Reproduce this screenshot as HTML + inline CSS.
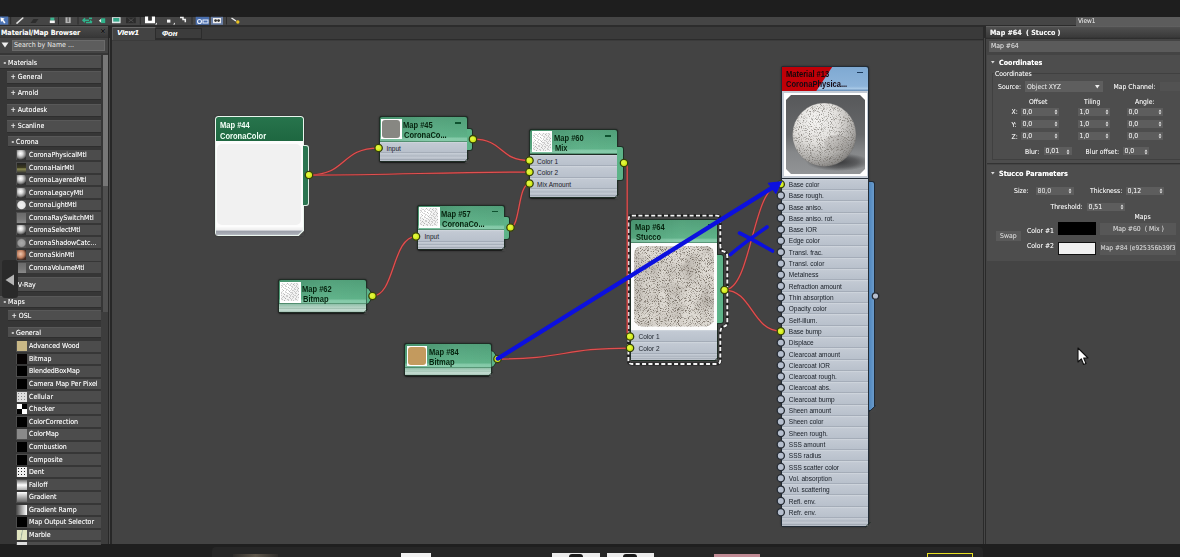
<!DOCTYPE html><html><head><meta charset="utf-8"><title>Slate Material Editor</title><style>
html,body{margin:0;padding:0}
body{width:1180px;height:557px;position:relative;overflow:hidden;background:#444;font-family:"Liberation Sans",sans-serif;color:#fafafa}
.a{position:absolute;box-sizing:border-box}
.ui{font-family:"DejaVu Sans Condensed","Liberation Sans",sans-serif;font-size:7px;white-space:nowrap;line-height:1;text-shadow:0 0 .6px rgba(255,255,255,.55)}
.r{font-size:6.8px}
.row{background:#4e4e4e;border-top:1px solid #585858;border-bottom:1px solid #2e2e2e}
.it{background:#4c4c4c}
.t{position:absolute;white-space:nowrap;line-height:1}
</style></head><body><div id="app" style="position:absolute;left:0;top:0;width:1180px;height:557px;overflow:hidden;filter:blur(0.35px)">
<div class="a " style="left:0px;top:0px;width:1180px;height:17px;background:#1e1e1e"></div>
<div class="a " style="left:0px;top:17px;width:1180px;height:9px;background:#454545;border-bottom:1px solid #2c2c2c"></div>
<div class="a " style="left:0px;top:544px;width:1180px;height:13px;background:#1f1f1f"></div>
<svg class="a" style="left:0;top:16px" width="246" height="10" viewBox="0 16 246 10">
<rect x="0" y="16.5" width="8.3" height="8.2" fill="#4d74b4"/><path d="M0.5 17.5L4.5 18.5L3.3 19.8L5.5 22.5L4.2 23.4L2.2 20.8L1 22Z" fill="#fff"/>
<path d="M10.7 17V24.5M58.5 17V24.5M78 17V24.5M140.3 17V24.5M192 17V24.5M226.5 17V24.5" stroke="#2a2a2a" stroke-width="1"/>
<path d="M17 23.2L22.8 18" stroke="#e0e0e0" stroke-width="1.6" stroke-linecap="round"/>
<path d="M30.5 23L33.5 19H38.5L35.5 23Z" fill="#2d2d2d"/>
<rect x="50.3" y="17.6" width="4" height="3" fill="#3db590"/><rect x="49.8" y="20.5" width="5" height="2.6" fill="#f4f4f4"/>
<rect x="65.5" y="17.3" width="5.2" height="5.8" fill="#b4b4b4"/><rect x="67.6" y="17.3" width="1" height="4.6" fill="#444"/>
<path d="M83 20.2H89M85 18.2L83 20.2L85 22.2M86 22.4H92M90 20.6L92 22.4" stroke="#2fb48c" stroke-width="1.5" fill="none"/><rect x="89" y="17.6" width="3" height="1.6" fill="#2fb48c"/>
<path d="M98.8 20.8L101.5 18.5V23Z" fill="#e8f8f0"/><rect x="101.2" y="18.3" width="4" height="4.8" fill="#2fb48c"/>
<rect x="112" y="17.2" width="8.6" height="6" fill="#dfe8e8"/><rect x="113.2" y="18" width="6.2" height="3.6" fill="#36a88a"/>
<rect x="126" y="17.4" width="9.8" height="5.8" fill="#2b2b2b"/><path d="M128.5 18.5L133.5 22M133.5 18.5L128.5 22" stroke="#555" stroke-width=".8"/>
<path d="M145 16.5H155V23.2H145ZM148.3 16.5V20.6H151.7V16.5" fill="#fff" fill-rule="evenodd"/><rect x="148.3" y="16.5" width="3.4" height="4" fill="#333"/><path d="M157 22.5V24.5H155Z" fill="#eee"/>
<rect x="167" y="19.6" width="3.4" height="3" fill="#f4f4f4"/><path d="M175 22.5V24.5H173Z" fill="#eee"/>
<path d="M180 17.5H183V19.5H185.3V22.3" stroke="#f0f0f0" stroke-width="1.5" fill="none"/>
<rect x="195.7" y="16.8" width="13.4" height="8" fill="#4a6fae"/><circle cx="199.5" cy="21.5" r="2" fill="none" stroke="#e8eefa" stroke-width="1.1"/><rect x="203" y="20" width="5" height="3" fill="none" stroke="#e8eefa" stroke-width="1"/>
<rect x="211" y="16.8" width="12" height="8" fill="#6a7fa5"/><rect x="213" y="18" width="8" height="5.2" fill="#f0f0f0"/><circle cx="215.6" cy="20.6" r="1.4" fill="#333"/><circle cx="218.6" cy="20.6" r="1.4" fill="#333"/>
<path d="M231.5 18L236 21" stroke="#f0f0f0" stroke-width="1.3"/><circle cx="237.8" cy="22" r="1.7" fill="#e8c020"/>
</svg>
<div class="a " style="left:0px;top:26px;width:112px;height:518px;background:#363636"></div>
<div class="a " style="left:107.5px;top:26px;width:4.2px;height:518px;background:#272727"></div>
<div class="a " style="left:108.6px;top:38px;width:1.5px;height:506px;background:#4a4a4a"></div>
<div class="a " style="left:0px;top:26px;width:107.5px;height:12.5px;background:linear-gradient(#5c5c5c 0,#484848 12%,#383838 85%,#2c2c2c 100%)"></div>
<div class="t ui" style="left:1px;top:28.5px;font-weight:bold;font-size:7.1px;color:#f4f4f4">Material/Map Browser</div>
<div class="t ui" style="left:99.5px;top:27.2px;font-weight:bold;font-size:9px;color:#0a0a0a">×</div>
<div class="a " style="left:0px;top:38px;width:108px;height:15px;background:#444"></div>
<svg class="a" style="left:1px;top:42px" width="8" height="6"><path d="M0.5 0.5H7.5L4 5.5Z" fill="#eee"/></svg>
<div class="a " style="left:12px;top:39.5px;width:93px;height:11px;background:#5d5d5d;border:1px solid #6a6a6a"></div>
<div class="t ui" style="left:14px;top:42px;color:#cfcfcf">Search by Name ...</div>
<div class="a " style="left:102.5px;top:55px;width:5px;height:131px;background:#777"></div>
<div class="a " style="left:102.5px;top:186px;width:5px;height:126px;background:#505050"></div>
<div class="a " style="left:101px;top:312px;width:6.5px;height:232px;background:#3d3d3d"></div>
<div class="a row" style="left:0px;top:55.3px;width:100.5px;height:14.2px;"></div>
<div class="t ui" style="left:3.5px;top:59.5px;"><b>-</b> Materials</div>
<div class="a row" style="left:7px;top:70.6px;width:93.5px;height:13px;"></div>
<div class="t ui" style="left:10.5px;top:74.19999999999999px;">+ General</div>
<div class="a row" style="left:7px;top:86.6px;width:93.5px;height:13px;"></div>
<div class="t ui" style="left:10.5px;top:90.19999999999999px;">+ Arnold</div>
<div class="a row" style="left:7px;top:103.5px;width:93.5px;height:13px;"></div>
<div class="t ui" style="left:10.5px;top:107.1px;">+ Autodesk</div>
<div class="a row" style="left:7px;top:119.5px;width:93.5px;height:13px;"></div>
<div class="t ui" style="left:10.5px;top:123.1px;">+ Scanline</div>
<div class="a row" style="left:8px;top:136px;width:92.5px;height:10.8px;"></div>
<div class="t ui" style="left:11.5px;top:138.5px;"><b>-</b> Corona</div>
<div class="a it" style="left:16px;top:149.7px;width:84.5px;height:10.6px;"></div>
<div class="a " style="left:16.5px;top:150.0px;width:9.5px;height:10px;background:radial-gradient(circle at 40% 35%,#fff 0,#ddd 25%,#888 55%,#333 75%)"></div>
<div class="t ui" style="left:29px;top:152.0px;">CoronaPhysicalMtl</div>
<div class="a it" style="left:16px;top:162.23px;width:84.5px;height:10.6px;"></div>
<div class="a " style="left:16.5px;top:162.53px;width:9.5px;height:10px;background:linear-gradient(#222 0,#3c3a20 45%,#8a8a50 60%,#333 100%)"></div>
<div class="t ui" style="left:29px;top:164.53px;">CoronaHairMtl</div>
<div class="a it" style="left:16px;top:174.76px;width:84.5px;height:10.6px;"></div>
<div class="a " style="left:16.5px;top:175.06px;width:9.5px;height:10px;background:radial-gradient(circle at 40% 35%,#fff 0,#ddd 25%,#888 55%,#333 75%)"></div>
<div class="t ui" style="left:29px;top:177.06px;">CoronaLayeredMtl</div>
<div class="a it" style="left:16px;top:187.29px;width:84.5px;height:10.6px;"></div>
<div class="a " style="left:16.5px;top:187.59px;width:9.5px;height:10px;background:radial-gradient(circle at 40% 35%,#fff 0,#ddd 25%,#888 55%,#333 75%)"></div>
<div class="t ui" style="left:29px;top:189.59px;">CoronaLegacyMtl</div>
<div class="a it" style="left:16px;top:199.82px;width:84.5px;height:10.6px;"></div>
<div class="a " style="left:16.5px;top:200.12px;width:9.5px;height:10px;background:radial-gradient(circle at 50% 50%,#f4f4f4 0,#e6e6e6 55%,#555 70%)"></div>
<div class="t ui" style="left:29px;top:202.12px;">CoronaLightMtl</div>
<div class="a it" style="left:16px;top:212.35px;width:84.5px;height:10.6px;"></div>
<div class="a " style="left:16.5px;top:212.65px;width:9.5px;height:10px;background:linear-gradient(#6a6a6a,#777 60%,#8a8a8a 100%)"></div>
<div class="t ui" style="left:29px;top:214.65px;">CoronaRaySwitchMtl</div>
<div class="a it" style="left:16px;top:224.88px;width:84.5px;height:10.6px;"></div>
<div class="a " style="left:16.5px;top:225.18px;width:9.5px;height:10px;background:radial-gradient(circle at 40% 35%,#fff 0,#ddd 25%,#888 55%,#333 75%)"></div>
<div class="t ui" style="left:29px;top:227.18px;">CoronaSelectMtl</div>
<div class="a it" style="left:16px;top:237.40999999999997px;width:84.5px;height:10.6px;"></div>
<div class="a " style="left:16.5px;top:237.70999999999998px;width:9.5px;height:10px;background:radial-gradient(circle at 50% 50%,#aaa 0,#999 50%,#555 70%)"></div>
<div class="t ui" style="left:29px;top:239.70999999999998px;">CoronaShadowCatc...</div>
<div class="a it" style="left:16px;top:249.94px;width:84.5px;height:10.6px;"></div>
<div class="a " style="left:16.5px;top:250.24px;width:9.5px;height:10px;background:radial-gradient(circle at 40% 40%,#f0c8b0 0,#c08060 45%,#402820 75%)"></div>
<div class="t ui" style="left:29px;top:252.24px;">CoronaSkinMtl</div>
<div class="a it" style="left:16px;top:262.46999999999997px;width:84.5px;height:10.6px;"></div>
<div class="a " style="left:16.5px;top:262.77px;width:9.5px;height:10px;background:linear-gradient(#6a6a6a,#777 60%,#8a8a8a 100%)"></div>
<div class="t ui" style="left:29px;top:264.77px;">CoronaVolumeMtl</div>
<div class="a row" style="left:7px;top:277px;width:93.5px;height:15px;"></div>
<div class="t ui" style="left:10.5px;top:281.6px;">+ V-Ray</div>
<div class="a row" style="left:0px;top:296px;width:100.5px;height:12px;"></div>
<div class="t ui" style="left:3.5px;top:299.1px;"><b>-</b> Maps</div>
<div class="a row" style="left:8px;top:310px;width:92.5px;height:11px;"></div>
<div class="t ui" style="left:11.5px;top:312.6px;">+ OSL</div>
<div class="a row" style="left:8px;top:327px;width:92.5px;height:10.8px;"></div>
<div class="t ui" style="left:11.5px;top:329.5px;"><b>-</b> General</div>
<div class="a it" style="left:16px;top:341.0px;width:84.5px;height:10.6px;"></div>
<div class="a " style="left:16.5px;top:341.3px;width:10px;height:10px;background:#c9b886"></div>
<div class="t ui" style="left:29px;top:343.3px;">Advanced Wood</div>
<div class="a it" style="left:16px;top:353.58px;width:84.5px;height:10.6px;"></div>
<div class="a " style="left:16.5px;top:353.88px;width:10px;height:10px;background:#060303"></div>
<div class="t ui" style="left:29px;top:355.88px;">Bitmap</div>
<div class="a it" style="left:16px;top:366.16px;width:84.5px;height:10.6px;"></div>
<div class="a " style="left:16.5px;top:366.46000000000004px;width:10px;height:10px;background:#000"></div>
<div class="t ui" style="left:29px;top:368.46000000000004px;">BlendedBoxMap</div>
<div class="a it" style="left:16px;top:378.74px;width:84.5px;height:10.6px;"></div>
<div class="a " style="left:16.5px;top:379.04px;width:10px;height:10px;background:#000"></div>
<div class="t ui" style="left:29px;top:381.04px;">Camera Map Per Pixel</div>
<div class="a it" style="left:16px;top:391.32px;width:84.5px;height:10.6px;"></div>
<div class="a " style="left:16.5px;top:391.62px;width:10px;height:10px;background:#ddd;background-image:radial-gradient(#888 30%,transparent 32%);background-size:3px 3px"></div>
<div class="t ui" style="left:29px;top:393.62px;">Cellular</div>
<div class="a it" style="left:16px;top:403.9px;width:84.5px;height:10.6px;"></div>
<div class="a " style="left:16.5px;top:404.2px;width:10px;height:10px;background:conic-gradient(#000 25%,#fff 0 50%,#000 0 75%,#fff 0)"></div>
<div class="t ui" style="left:29px;top:406.2px;">Checker</div>
<div class="a it" style="left:16px;top:416.48px;width:84.5px;height:10.6px;"></div>
<div class="a " style="left:16.5px;top:416.78000000000003px;width:10px;height:10px;background:#000"></div>
<div class="t ui" style="left:29px;top:418.78000000000003px;">ColorCorrection</div>
<div class="a it" style="left:16px;top:429.06px;width:84.5px;height:10.6px;"></div>
<div class="a " style="left:16.5px;top:429.36px;width:10px;height:10px;background:#8a8a8a"></div>
<div class="t ui" style="left:29px;top:431.36px;">ColorMap</div>
<div class="a it" style="left:16px;top:441.64px;width:84.5px;height:10.6px;"></div>
<div class="a " style="left:16.5px;top:441.94px;width:10px;height:10px;background:#000"></div>
<div class="t ui" style="left:29px;top:443.94px;">Combustion</div>
<div class="a it" style="left:16px;top:454.22px;width:84.5px;height:10.6px;"></div>
<div class="a " style="left:16.5px;top:454.52000000000004px;width:10px;height:10px;background:#000"></div>
<div class="t ui" style="left:29px;top:456.52000000000004px;">Composite</div>
<div class="a it" style="left:16px;top:466.8px;width:84.5px;height:10.6px;"></div>
<div class="a " style="left:16.5px;top:467.1px;width:10px;height:10px;background:#eee;background-image:radial-gradient(#222 35%,transparent 37%);background-size:3px 3px"></div>
<div class="t ui" style="left:29px;top:469.1px;">Dent</div>
<div class="a it" style="left:16px;top:479.38px;width:84.5px;height:10.6px;"></div>
<div class="a " style="left:16.5px;top:479.68px;width:10px;height:10px;background:linear-gradient(#777,#fff 50%,#aaa)"></div>
<div class="t ui" style="left:29px;top:481.68px;">Falloff</div>
<div class="a it" style="left:16px;top:491.96000000000004px;width:84.5px;height:10.6px;"></div>
<div class="a " style="left:16.5px;top:492.26000000000005px;width:10px;height:10px;background:linear-gradient(#fff,#666)"></div>
<div class="t ui" style="left:29px;top:494.26000000000005px;">Gradient</div>
<div class="a it" style="left:16px;top:504.53999999999996px;width:84.5px;height:10.6px;"></div>
<div class="a " style="left:16.5px;top:504.84px;width:10px;height:10px;background:linear-gradient(90deg,#555,#fff)"></div>
<div class="t ui" style="left:29px;top:506.84px;">Gradient Ramp</div>
<div class="a it" style="left:16px;top:517.12px;width:84.5px;height:10.6px;"></div>
<div class="a " style="left:16.5px;top:517.42px;width:10px;height:10px;background:#000"></div>
<div class="t ui" style="left:29px;top:519.42px;">Map Output Selector</div>
<div class="a it" style="left:16px;top:529.7px;width:84.5px;height:10.6px;"></div>
<div class="a " style="left:16.5px;top:530.0px;width:10px;height:10px;background:#e0e4c0;background-image:linear-gradient(100deg,transparent 40%,#9a9 45%,transparent 55%)"></div>
<div class="t ui" style="left:29px;top:532.0px;">Marble</div>
<div class="a it" style="left:16px;top:541.98px;width:84.5px;height:3px;"></div>
<div class="a " style="left:16.5px;top:542.28px;width:10px;height:2.5px;background:#ddd"></div>
<div class="a " style="left:2px;top:260px;width:16px;height:38px;background:#2a2a2a;border-radius:3px"></div>
<svg class="a" style="left:5px;top:274px" width="10" height="12"><path d="M9 0.5V11.5L0.5 6Z" fill="#b5b5b5"/></svg>
<div class="a " style="left:112px;top:38px;width:871px;height:506px;background:#434343"></div>
<div class="a " style="left:112px;top:26px;width:871px;height:13.5px;background:#3a3a3a;border-bottom:1px solid #2c2c2c;border-top:1px solid #2c2c2c"></div>
<div class="a " style="left:112px;top:27px;width:44px;height:13.5px;background:#434343;border-top:1px solid #6a6a6a;border-left:1px solid #5a5a5a;border-right:1px solid #2c2c2c"></div>
<div class="a " style="left:112px;top:40.3px;width:871px;height:0.8px;background:#3b3b3b"></div>
<div class="t ui" style="left:117px;top:28.7px;font-family:&quot;Liberation Sans&quot;,sans-serif;font-weight:bold;font-style:italic;font-size:7.8px;color:#fff">View1</div>
<div class="a " style="left:156px;top:28px;width:46px;height:10.8px;background:#3c3c3c;border:1px solid #2c2c2c;border-left:none"></div>
<div class="t ui" style="left:162px;top:29.8px;font-family:&quot;Liberation Sans&quot;,sans-serif;font-weight:bold;font-style:italic;font-size:7.8px;color:#f0f0f0">Фон</div>
<div class="a " style="left:982.6px;top:26px;width:3.6px;height:518px;background:#2a2a2a"></div>
<div class="a " style="left:983.9px;top:38px;width:1.2px;height:506px;background:#474747"></div>
<svg width="0" height="0" style="position:absolute"><defs>
<filter id="stc" x="0" y="0" width="100%" height="100%"><feTurbulence type="fractalNoise" baseFrequency="1.1" numOctaves="1" seed="7" result="n"/><feColorMatrix in="n" type="matrix" values="0 0 0 0 0  0 0 0 0 0  0 0 0 0 0  5 0 0 0 -2.55"/><feGaussianBlur stdDeviation="0.4" result="b"/><feComposite in="SourceGraphic" in2="b" operator="in"/></filter>
<filter id="cl" x="0" y="0" width="100%" height="100%"><feTurbulence type="fractalNoise" baseFrequency="0.06" numOctaves="2" seed="3"/><feColorMatrix type="matrix" values="0 0 0 0 0  0 0 0 0 0  0 0 0 0 0  1.6 1.6 0 0 -1.35" result="b"/><feComposite in="SourceGraphic" in2="b" operator="in"/></filter>
</defs></svg>
<div class="a " style="left:214.5px;top:115.5px;width:89.5px;height:120.7px;background:#eaf5ee;border-radius:3.5px;box-shadow:0 0 1.5px rgba(0,0,0,.5)"></div>
<div class="a " style="left:303px;top:145px;width:6.3px;height:61px;background:#2b7551;border:1px solid #dfeee6;border-left:none;border-radius:0 3px 3px 0"></div>
<div class="a " style="left:215.8px;top:116.8px;width:86.9px;height:24.2px;background:linear-gradient(180deg,#27744c,#1e6740);border-radius:2.5px 2.5px 0 0"></div>
<div class="t " style="left:219.5px;top:121.1px;font-family:&quot;Liberation Sans&quot;,sans-serif;font-size:8.4px;color:#f4fff8;font-weight:bold;transform:scaleX(.9);transform-origin:0 0">Map #44</div>
<div class="t " style="left:219.7px;top:131.79999999999998px;font-family:&quot;Liberation Sans&quot;,sans-serif;font-size:8.4px;color:#f0fff6;font-weight:bold;transform:scaleX(.9);transform-origin:0 0">CoronaColor</div>
<div class="a " style="left:215.8px;top:141px;width:86.9px;height:85.5px;background:#fdfdfd"></div>
<div class="a " style="left:217.3px;top:143.5px;width:83.6px;height:81.5px;background:#f1f1f1;border-radius:5px"></div>
<div class="a " style="left:215.8px;top:226.5px;width:86.9px;height:8.5px;background:linear-gradient(180deg,#fafafa 0,#eeeeee 38%,#d8dade 42%,#9a9ea8 50%,#a6aab3 80%,#b8bcc4 100%)"></div>
<svg class="a" style="left:298.2px;top:230.4px" width="6" height="6"><path d="M6 0.3V6H0.3Z" fill="#444"/><path d="M5.8 0L0 5.8" stroke="#eaf5ee" stroke-width="1.2" fill="none"/></svg>
<div class="a " style="left:378.6px;top:116px;width:89px;height:45.8px;background:#1f2d25;border-radius:3px;box-shadow:0 .5px 1.5px rgba(0,0,0,.7)"></div>
<div class="a " style="left:466.6px;top:128px;width:6.5px;height:22.5px;background:#5db388;border:1px solid #1f2d25;border-left:none;border-radius:0 3px 3px 0"></div>
<div class="a " style="left:379.6px;top:117px;width:87px;height:24.5px;background:linear-gradient(90deg,rgba(0,0,0,.07),rgba(255,255,255,.04) 60%,rgba(255,255,255,.02)),linear-gradient(180deg,#4d9d76 0,#5bb086 78%,#82c9a7 86%,#82c9a7 94%,#3b7757 100%);border-radius:2px 2px 0 0"></div>
<div class="a " style="left:381.1px;top:118.7px;width:20.5px;height:20.5px;background:#fff"></div>
<div class="a " style="left:382.3px;top:119.9px;width:18px;height:18px;background:#878782;border-radius:3px"></div>
<div class="t " style="left:403.20000000000005px;top:121.19999999999999px;font-family:&quot;Liberation Sans&quot;,sans-serif;font-size:8.4px;color:#07240f;font-weight:bold;transform:scaleX(.9);transform-origin:0 0">Map #45</div>
<div class="t " style="left:403.80000000000007px;top:131.2px;font-family:&quot;Liberation Sans&quot;,sans-serif;font-size:8.4px;color:#07240f;font-weight:bold;transform:scaleX(.9);transform-origin:0 0">CoronaCo...</div>
<div class="a " style="left:454.8px;top:122.2px;width:6.2px;height:1.8px;background:#0f5230"></div>
<div class="a " style="left:379.6px;top:141.5px;width:87px;height:11.8px;background:linear-gradient(180deg,#d2d8df 0,#c2c9d3 14%,#b9c1cc 88%,#99a1ad 100%)"></div>
<div class="t " style="left:386.40000000000003px;top:145.6px;font-family:&quot;Liberation Sans&quot;,sans-serif;font-size:6.5px;color:#1a2028;">Input</div>
<div class="a " style="left:379.6px;top:153.3px;width:87px;height:7.5px;background:linear-gradient(180deg,#c9cfd8 0,#b7bfc9 30%,#a4acb7 38%,#c6ccd5 48%,#b9c0ca 70%,#9ea6b1 80%,#c2c8d1 90%,#aab2bd 100%)"></div>
<svg class="a" style="left:463.6px;top:157.8px" width="5" height="5"><path d="M5 0.5V5H0.5Z" fill="#444"/><path d="M4.5 0L0 4.5" stroke="#1f2d25" stroke-width="1" fill="none"/></svg>
<div class="a " style="left:529.3px;top:128.6px;width:88.7px;height:69.19999999999999px;background:#1f2d25;border-radius:3px;box-shadow:0 .5px 1.5px rgba(0,0,0,.7)"></div>
<div class="a " style="left:617.0px;top:146px;width:6.5px;height:34.5px;background:#5db388;border:1px solid #1f2d25;border-left:none;border-radius:0 3px 3px 0"></div>
<div class="a " style="left:530.3px;top:129.6px;width:86.7px;height:24.9px;background:linear-gradient(90deg,rgba(0,0,0,.07),rgba(255,255,255,.04) 60%,rgba(255,255,255,.02)),linear-gradient(180deg,#4d9d76 0,#5bb086 78%,#82c9a7 86%,#82c9a7 94%,#3b7757 100%);border-radius:2px 2px 0 0"></div>
<div class="a " style="left:531.8px;top:131.29999999999998px;width:20.5px;height:20.5px;background:#fff"></div>
<div class="a " style="left:533.0px;top:132.5px;width:18px;height:18px;background:#f2f2f2;background-image:repeating-linear-gradient(35deg,transparent 0 2px,rgba(90,90,90,.28) 2px 2.6px),repeating-linear-gradient(120deg,transparent 0 2.5px,rgba(90,90,90,.22) 2.5px 3px),radial-gradient(circle at 30% 30%,#fff 0 25%,transparent 40%);border-radius:3px"></div>
<div class="t " style="left:553.9px;top:133.79999999999998px;font-family:&quot;Liberation Sans&quot;,sans-serif;font-size:8.4px;color:#07240f;font-weight:bold;transform:scaleX(.9);transform-origin:0 0">Map #60</div>
<div class="t " style="left:554.5px;top:143.79999999999998px;font-family:&quot;Liberation Sans&quot;,sans-serif;font-size:8.4px;color:#07240f;font-weight:bold;transform:scaleX(.9);transform-origin:0 0">Mix</div>
<div class="a " style="left:605.2px;top:134.79999999999998px;width:6.2px;height:1.8px;background:#0f5230"></div>
<div class="a " style="left:530.3px;top:154.5px;width:86.7px;height:11.6px;background:linear-gradient(180deg,#d2d8df 0,#c2c9d3 14%,#b9c1cc 88%,#99a1ad 100%)"></div>
<div class="t " style="left:537.0999999999999px;top:158.6px;font-family:&quot;Liberation Sans&quot;,sans-serif;font-size:6.5px;color:#1a2028;">Color 1</div>
<div class="a " style="left:530.3px;top:166.1px;width:86.7px;height:11.6px;background:linear-gradient(180deg,#d2d8df 0,#c2c9d3 14%,#b9c1cc 88%,#99a1ad 100%)"></div>
<div class="t " style="left:537.0999999999999px;top:170.2px;font-family:&quot;Liberation Sans&quot;,sans-serif;font-size:6.5px;color:#1a2028;">Color 2</div>
<div class="a " style="left:530.3px;top:177.7px;width:86.7px;height:11.6px;background:linear-gradient(180deg,#d2d8df 0,#c2c9d3 14%,#b9c1cc 88%,#99a1ad 100%)"></div>
<div class="t " style="left:537.0999999999999px;top:181.79999999999998px;font-family:&quot;Liberation Sans&quot;,sans-serif;font-size:6.5px;color:#1a2028;">Mix Amount</div>
<div class="a " style="left:530.3px;top:189.29999999999998px;width:86.7px;height:7.5px;background:linear-gradient(180deg,#c9cfd8 0,#b7bfc9 30%,#a4acb7 38%,#c6ccd5 48%,#b9c0ca 70%,#9ea6b1 80%,#c2c8d1 90%,#aab2bd 100%)"></div>
<svg class="a" style="left:614.0px;top:193.79999999999998px" width="5" height="5"><path d="M5 0.5V5H0.5Z" fill="#444"/><path d="M4.5 0L0 4.5" stroke="#1f2d25" stroke-width="1" fill="none"/></svg>
<div class="a " style="left:416.7px;top:204.5px;width:88px;height:45.8px;background:#1f2d25;border-radius:3px;box-shadow:0 .5px 1.5px rgba(0,0,0,.7)"></div>
<div class="a " style="left:503.7px;top:216px;width:6.5px;height:23.5px;background:#5db388;border:1px solid #1f2d25;border-left:none;border-radius:0 3px 3px 0"></div>
<div class="a " style="left:417.7px;top:205.5px;width:86px;height:24.5px;background:linear-gradient(90deg,rgba(0,0,0,.07),rgba(255,255,255,.04) 60%,rgba(255,255,255,.02)),linear-gradient(180deg,#4d9d76 0,#5bb086 78%,#82c9a7 86%,#82c9a7 94%,#3b7757 100%);border-radius:2px 2px 0 0"></div>
<div class="a " style="left:419.2px;top:207.2px;width:20.5px;height:20.5px;background:#fff"></div>
<div class="a " style="left:420.4px;top:208.4px;width:18px;height:18px;background:#f2f2f2;background-image:repeating-linear-gradient(35deg,transparent 0 2px,rgba(90,90,90,.28) 2px 2.6px),repeating-linear-gradient(120deg,transparent 0 2.5px,rgba(90,90,90,.22) 2.5px 3px),radial-gradient(circle at 30% 30%,#fff 0 25%,transparent 40%);border-radius:3px"></div>
<div class="t " style="left:441.3px;top:209.7px;font-family:&quot;Liberation Sans&quot;,sans-serif;font-size:8.4px;color:#07240f;font-weight:bold;transform:scaleX(.9);transform-origin:0 0">Map #57</div>
<div class="t " style="left:441.90000000000003px;top:219.7px;font-family:&quot;Liberation Sans&quot;,sans-serif;font-size:8.4px;color:#07240f;font-weight:bold;transform:scaleX(.9);transform-origin:0 0">CoronaCo...</div>
<div class="a " style="left:491.9px;top:210.7px;width:6.2px;height:1.8px;background:#0f5230"></div>
<div class="a " style="left:417.7px;top:230.0px;width:86px;height:11.8px;background:linear-gradient(180deg,#d2d8df 0,#c2c9d3 14%,#b9c1cc 88%,#99a1ad 100%)"></div>
<div class="t " style="left:424.5px;top:234.1px;font-family:&quot;Liberation Sans&quot;,sans-serif;font-size:6.5px;color:#1a2028;">Input</div>
<div class="a " style="left:417.7px;top:241.8px;width:86px;height:7.5px;background:linear-gradient(180deg,#c9cfd8 0,#b7bfc9 30%,#a4acb7 38%,#c6ccd5 48%,#b9c0ca 70%,#9ea6b1 80%,#c2c8d1 90%,#aab2bd 100%)"></div>
<svg class="a" style="left:500.7px;top:246.3px" width="5" height="5"><path d="M5 0.5V5H0.5Z" fill="#444"/><path d="M4.5 0L0 4.5" stroke="#1f2d25" stroke-width="1" fill="none"/></svg>
<div class="a " style="left:277.6px;top:279.4px;width:89px;height:33.8px;background:#1f2d25;border-radius:3px;box-shadow:0 .5px 1.5px rgba(0,0,0,.7)"></div>
<svg class="a" style="left:366.1px;top:286.0px" width="8" height="20" viewBox="0 0 8 20"><path d="M0 1.5L2.5 2.5L6.3 8V12L2.5 17.5L0 18.5Z" fill="#5db388" stroke="#1f2d25" stroke-width="1" stroke-linejoin="round"/></svg>
<div class="a " style="left:278.6px;top:280.4px;width:87px;height:24px;background:linear-gradient(90deg,rgba(0,0,0,.07),rgba(255,255,255,.04) 60%,rgba(255,255,255,.02)),linear-gradient(180deg,#4d9d76 0,#5bb086 78%,#82c9a7 86%,#82c9a7 94%,#3b7757 100%);border-radius:2px 2px 0 0"></div>
<div class="a " style="left:280.1px;top:282.09999999999997px;width:20.5px;height:20.5px;background:#fff"></div>
<div class="a " style="left:281.3px;top:283.29999999999995px;width:18px;height:18px;background:#f2f2f2;background-image:repeating-linear-gradient(35deg,transparent 0 2px,rgba(90,90,90,.28) 2px 2.6px),repeating-linear-gradient(120deg,transparent 0 2.5px,rgba(90,90,90,.22) 2.5px 3px),radial-gradient(circle at 30% 30%,#fff 0 25%,transparent 40%);border-radius:3px"></div>
<div class="t " style="left:302.20000000000005px;top:284.6px;font-family:&quot;Liberation Sans&quot;,sans-serif;font-size:8.4px;color:#07240f;font-weight:bold;transform:scaleX(.9);transform-origin:0 0">Map #62</div>
<div class="t " style="left:302.80000000000007px;top:294.6px;font-family:&quot;Liberation Sans&quot;,sans-serif;font-size:8.4px;color:#07240f;font-weight:bold;transform:scaleX(.9);transform-origin:0 0">Bitmap</div>
<div class="a " style="left:278.6px;top:304.4px;width:87px;height:7.800000000000001px;background:linear-gradient(180deg,#8fbfa8 0,#a6cbb9 25%,#b4d2c4 45%,#9fc0b0 55%,#c2dbd0 65%,#bcd6ca 85%,#9dbcae 100%)"></div>
<svg class="a" style="left:362.6px;top:309.2px" width="5" height="5"><path d="M5 0.5V5H0.5Z" fill="#444"/><path d="M4.5 0L0 4.5" stroke="#1f2d25" stroke-width="1" fill="none"/></svg>
<div class="a " style="left:404px;top:342.8px;width:87.8px;height:32.9px;background:#1f2d25;border-radius:3px;box-shadow:0 .5px 1.5px rgba(0,0,0,.7)"></div>
<svg class="a" style="left:491.3px;top:348.8px" width="8" height="20" viewBox="0 0 8 20"><path d="M0 1.5L2.5 2.5L6.3 8V12L2.5 17.5L0 18.5Z" fill="#5db388" stroke="#1f2d25" stroke-width="1" stroke-linejoin="round"/></svg>
<div class="a " style="left:405px;top:343.8px;width:85.8px;height:24.3px;background:linear-gradient(90deg,rgba(0,0,0,.07),rgba(255,255,255,.04) 60%,rgba(255,255,255,.02)),linear-gradient(180deg,#4d9d76 0,#5bb086 78%,#82c9a7 86%,#82c9a7 94%,#3b7757 100%);border-radius:2px 2px 0 0"></div>
<div class="a " style="left:406.5px;top:345.5px;width:20.5px;height:20.5px;background:#fff"></div>
<div class="a " style="left:407.7px;top:346.7px;width:18px;height:18px;background:#c39a5e;background-image:radial-gradient(rgba(120,80,30,.5) 30%,transparent 35%);background-size:2px 2px;border-radius:3px"></div>
<div class="t " style="left:428.6px;top:348.00000000000006px;font-family:&quot;Liberation Sans&quot;,sans-serif;font-size:8.4px;color:#07240f;font-weight:bold;transform:scaleX(.9);transform-origin:0 0">Map #84</div>
<div class="t " style="left:429.20000000000005px;top:358.00000000000006px;font-family:&quot;Liberation Sans&quot;,sans-serif;font-size:8.4px;color:#07240f;font-weight:bold;transform:scaleX(.9);transform-origin:0 0">Bitmap</div>
<div class="a " style="left:405px;top:368.1px;width:85.8px;height:6.6px;background:linear-gradient(180deg,#8fbfa8 0,#a6cbb9 25%,#b4d2c4 45%,#9fc0b0 55%,#c2dbd0 65%,#bcd6ca 85%,#9dbcae 100%)"></div>
<svg class="a" style="left:487.8px;top:371.7px" width="5" height="5"><path d="M5 0.5V5H0.5Z" fill="#444"/><path d="M4.5 0L0 4.5" stroke="#1f2d25" stroke-width="1" fill="none"/></svg>
<div class="a " style="left:630px;top:218.5px;width:88.3px;height:142.5px;background:#1f2d25;border-radius:3px"></div>
<div class="a " style="left:717.3px;top:254px;width:7px;height:70px;background:#5db388;border:1px solid #1f2d25;border-left:none;border-radius:0 3px 3px 0"></div>
<div class="a " style="left:631px;top:219.5px;width:86.3px;height:23.5px;background:linear-gradient(90deg,rgba(0,0,0,.07),rgba(255,255,255,.04) 60%,rgba(255,255,255,.02)),linear-gradient(180deg,#4d9d76 0,#5bb086 78%,#82c9a7 86%,#82c9a7 94%,#3b7757 100%);border-radius:2px 2px 0 0"></div>
<div class="t " style="left:635px;top:222.9px;font-family:&quot;Liberation Sans&quot;,sans-serif;font-size:8.4px;color:#07240f;font-weight:bold;transform:scaleX(.9);transform-origin:0 0">Map #64</div>
<div class="t " style="left:636.2px;top:232.9px;font-family:&quot;Liberation Sans&quot;,sans-serif;font-size:8.4px;color:#07240f;font-weight:bold;transform:scaleX(.9);transform-origin:0 0">Stucco</div>
<div class="a " style="left:707.5px;top:223.8px;width:6.2px;height:1.8px;background:#0f5230"></div>
<div class="a " style="left:631px;top:243px;width:86.3px;height:86.5px;background:#fcfcfc"></div>
<svg class="a" style="left:634px;top:246.3px" width="80" height="80.4" viewBox="0 0 80 80.4"><rect width="80" height="80.4" rx="8" fill="#dedad3"/><rect width="80" height="80.4" rx="8" fill="#807870" filter="url(#cl)" opacity=".35"/><rect width="80" height="80.4" rx="8" fill="#6a6258" filter="url(#stc)" opacity=".85"/></svg>
<div class="a " style="left:631px;top:329.5px;width:86.3px;height:12px;background:linear-gradient(180deg,#d2d8df 0,#c2c9d3 14%,#b9c1cc 88%,#99a1ad 100%)"></div>
<div class="t " style="left:638.6px;top:333.8px;font-family:&quot;Liberation Sans&quot;,sans-serif;font-size:6.5px;color:#1a2028;">Color 1</div>
<div class="a " style="left:631px;top:341.5px;width:86.3px;height:12px;background:linear-gradient(180deg,#d2d8df 0,#c2c9d3 14%,#b9c1cc 88%,#99a1ad 100%)"></div>
<div class="t " style="left:638.6px;top:345.8px;font-family:&quot;Liberation Sans&quot;,sans-serif;font-size:6.5px;color:#1a2028;">Color 2</div>
<div class="a " style="left:631px;top:353.5px;width:86.3px;height:6.5px;background:linear-gradient(180deg,#c9cfd8 0,#b7bfc9 30%,#a4acb7 38%,#c6ccd5 48%,#b9c0ca 70%,#9ea6b1 80%,#c2c8d1 90%,#aab2bd 100%)"></div>
<svg class="a" style="left:714.3px;top:357px" width="5" height="5"><path d="M5 0.5V5H0.5Z" fill="#444"/><path d="M4.5 0L0 4.5" stroke="#1f2d25" stroke-width="1" fill="none"/></svg>
<div class="a " style="left:781.3px;top:65.5px;width:88.2px;height:461.5px;background:#222c36;border-radius:3px;box-shadow:0 0 1.5px rgba(0,0,0,.6)"></div>
<div class="a " style="left:869px;top:181px;width:6.3px;height:229.5px;background:linear-gradient(90deg,#4f86bd,#6a9bcc);border:1px solid #1f2a36;border-left:none;border-radius:0 3px 0 0"></div>
<svg class="a" style="left:869px;top:405px" width="7" height="7"><path d="M7 0V7H0Z" fill="#444"/><path d="M6.8 0.5L0 6.8" stroke="#1f2a36" fill="none"/></svg>
<div class="a " style="left:782.3px;top:66.5px;width:86.2px;height:24px;background:linear-gradient(180deg,#7fa9d2 0,#8db4da 80%,#a8c8e6 90%,#5d86b0 100%);border-radius:2px 2px 0 0"></div>
<svg class="a" style="left:782.3px;top:66.5px" width="54" height="24"><path d="M0 0H50.2L34.3 24H0Z" fill="#c00008"/></svg>
<div class="t " style="left:785.5px;top:70.39999999999999px;font-family:&quot;Liberation Sans&quot;,sans-serif;font-size:8.4px;color:#14060a;font-weight:bold;transform:scaleX(.9);transform-origin:0 0">Material #13</div>
<div class="t " style="left:786px;top:80.39999999999999px;font-family:&quot;Liberation Sans&quot;,sans-serif;font-size:8.4px;color:#160a14;font-weight:bold;transform:scaleX(.9);transform-origin:0 0">CoronaPhysica...</div>
<div class="a " style="left:857.2px;top:71.6px;width:6.2px;height:1.8px;background:#1c3a5c"></div>
<div class="a " style="left:782.3px;top:90.5px;width:86.2px;height:87.5px;background:#c3cad4"></div>
<div class="a " style="left:784px;top:92.7px;width:83px;height:83px;background:#fff"></div>
<svg class="a" style="left:786px;top:94.7px" width="79" height="79" viewBox="0 0 79 79"><defs><radialGradient id="sph" cx="36%" cy="28%" r="78%"><stop offset="0" stop-color="#f6f5f3"/><stop offset=".45" stop-color="#e2e0dd"/><stop offset=".75" stop-color="#b4b2af"/><stop offset="1" stop-color="#7f7d7b"/></radialGradient><linearGradient id="bgp" x1="0" y1="0" x2="0" y2="1"><stop offset="0" stop-color="#57585a"/><stop offset=".5" stop-color="#66686a"/><stop offset=".72" stop-color="#858789"/><stop offset="1" stop-color="#929496"/></linearGradient><radialGradient id="shd" cx="50%" cy="50%" r="50%"><stop offset="0" stop-color="#2a2a2c" stop-opacity=".85"/><stop offset=".6" stop-color="#2a2a2c" stop-opacity=".5"/><stop offset="1" stop-color="#2a2a2c" stop-opacity="0"/></radialGradient><clipPath id="sc"><circle cx="38.3" cy="39.7" r="31.8"/></clipPath></defs>
<path d="M5 0H74L79 5V74L74 79H5L0 74V5Z" fill="url(#bgp)"/>
<ellipse cx="52" cy="67" rx="32" ry="9" fill="url(#shd)"/>
<circle cx="38.3" cy="39.7" r="31.8" fill="url(#sph)"/>
<g clip-path="url(#sc)"><rect x="5" y="5" width="70" height="70" fill="#6a6660" filter="url(#stc)" opacity=".65"/><ellipse cx="50" cy="48" rx="12" ry="8" fill="#8a8884" opacity=".25"/></g>
<circle cx="38.3" cy="39.7" r="31.8" fill="none" stroke="#666" stroke-opacity=".3" stroke-width="1"/>
</svg>
<div class="a " style="left:782.3px;top:178.6px;width:86.2px;height:11.31px;background:linear-gradient(180deg,#d2d8df 0,#c2c9d3 14%,#b9c1cc 88%,#99a1ad 100%)"></div>
<div class="t " style="left:788.8px;top:181.9px;font-family:&quot;Liberation Sans&quot;,sans-serif;font-size:6.5px;color:#161c24;">Base color</div>
<div class="a " style="left:782.3px;top:189.91px;width:86.2px;height:11.31px;background:linear-gradient(180deg,#d2d8df 0,#c2c9d3 14%,#b9c1cc 88%,#99a1ad 100%)"></div>
<div class="t " style="left:788.8px;top:193.21px;font-family:&quot;Liberation Sans&quot;,sans-serif;font-size:6.5px;color:#161c24;">Base rough.</div>
<div class="a " style="left:782.3px;top:201.22px;width:86.2px;height:11.31px;background:linear-gradient(180deg,#d2d8df 0,#c2c9d3 14%,#b9c1cc 88%,#99a1ad 100%)"></div>
<div class="t " style="left:788.8px;top:204.52px;font-family:&quot;Liberation Sans&quot;,sans-serif;font-size:6.5px;color:#161c24;">Base aniso.</div>
<div class="a " style="left:782.3px;top:212.53px;width:86.2px;height:11.31px;background:linear-gradient(180deg,#d2d8df 0,#c2c9d3 14%,#b9c1cc 88%,#99a1ad 100%)"></div>
<div class="t " style="left:788.8px;top:215.83px;font-family:&quot;Liberation Sans&quot;,sans-serif;font-size:6.5px;color:#161c24;">Base aniso. rot.</div>
<div class="a " style="left:782.3px;top:223.84px;width:86.2px;height:11.31px;background:linear-gradient(180deg,#d2d8df 0,#c2c9d3 14%,#b9c1cc 88%,#99a1ad 100%)"></div>
<div class="t " style="left:788.8px;top:227.14000000000001px;font-family:&quot;Liberation Sans&quot;,sans-serif;font-size:6.5px;color:#161c24;">Base IOR</div>
<div class="a " style="left:782.3px;top:235.15px;width:86.2px;height:11.31px;background:linear-gradient(180deg,#d2d8df 0,#c2c9d3 14%,#b9c1cc 88%,#99a1ad 100%)"></div>
<div class="t " style="left:788.8px;top:238.45000000000002px;font-family:&quot;Liberation Sans&quot;,sans-serif;font-size:6.5px;color:#161c24;">Edge color</div>
<div class="a " style="left:782.3px;top:246.45999999999998px;width:86.2px;height:11.31px;background:linear-gradient(180deg,#d2d8df 0,#c2c9d3 14%,#b9c1cc 88%,#99a1ad 100%)"></div>
<div class="t " style="left:788.8px;top:249.76px;font-family:&quot;Liberation Sans&quot;,sans-serif;font-size:6.5px;color:#161c24;">Transl. frac.</div>
<div class="a " style="left:782.3px;top:257.77px;width:86.2px;height:11.31px;background:linear-gradient(180deg,#d2d8df 0,#c2c9d3 14%,#b9c1cc 88%,#99a1ad 100%)"></div>
<div class="t " style="left:788.8px;top:261.07px;font-family:&quot;Liberation Sans&quot;,sans-serif;font-size:6.5px;color:#161c24;">Transl. color</div>
<div class="a " style="left:782.3px;top:269.08px;width:86.2px;height:11.31px;background:linear-gradient(180deg,#d2d8df 0,#c2c9d3 14%,#b9c1cc 88%,#99a1ad 100%)"></div>
<div class="t " style="left:788.8px;top:272.38px;font-family:&quot;Liberation Sans&quot;,sans-serif;font-size:6.5px;color:#161c24;">Metalness</div>
<div class="a " style="left:782.3px;top:280.39px;width:86.2px;height:11.31px;background:linear-gradient(180deg,#d2d8df 0,#c2c9d3 14%,#b9c1cc 88%,#99a1ad 100%)"></div>
<div class="t " style="left:788.8px;top:283.69px;font-family:&quot;Liberation Sans&quot;,sans-serif;font-size:6.5px;color:#161c24;">Refraction amount</div>
<div class="a " style="left:782.3px;top:291.7px;width:86.2px;height:11.31px;background:linear-gradient(180deg,#d2d8df 0,#c2c9d3 14%,#b9c1cc 88%,#99a1ad 100%)"></div>
<div class="t " style="left:788.8px;top:295.0px;font-family:&quot;Liberation Sans&quot;,sans-serif;font-size:6.5px;color:#161c24;">Thin absorption</div>
<div class="a " style="left:782.3px;top:303.01px;width:86.2px;height:11.31px;background:linear-gradient(180deg,#d2d8df 0,#c2c9d3 14%,#b9c1cc 88%,#99a1ad 100%)"></div>
<div class="t " style="left:788.8px;top:306.31px;font-family:&quot;Liberation Sans&quot;,sans-serif;font-size:6.5px;color:#161c24;">Opacity color</div>
<div class="a " style="left:782.3px;top:314.32px;width:86.2px;height:11.31px;background:linear-gradient(180deg,#d2d8df 0,#c2c9d3 14%,#b9c1cc 88%,#99a1ad 100%)"></div>
<div class="t " style="left:788.8px;top:317.62px;font-family:&quot;Liberation Sans&quot;,sans-serif;font-size:6.5px;color:#161c24;">Self-illum.</div>
<div class="a " style="left:782.3px;top:325.63px;width:86.2px;height:11.31px;background:linear-gradient(180deg,#d2d8df 0,#c2c9d3 14%,#b9c1cc 88%,#99a1ad 100%)"></div>
<div class="t " style="left:788.8px;top:328.93px;font-family:&quot;Liberation Sans&quot;,sans-serif;font-size:6.5px;color:#161c24;">Base bump</div>
<div class="a " style="left:782.3px;top:336.94px;width:86.2px;height:11.31px;background:linear-gradient(180deg,#d2d8df 0,#c2c9d3 14%,#b9c1cc 88%,#99a1ad 100%)"></div>
<div class="t " style="left:788.8px;top:340.24px;font-family:&quot;Liberation Sans&quot;,sans-serif;font-size:6.5px;color:#161c24;">Displace</div>
<div class="a " style="left:782.3px;top:348.25px;width:86.2px;height:11.31px;background:linear-gradient(180deg,#d2d8df 0,#c2c9d3 14%,#b9c1cc 88%,#99a1ad 100%)"></div>
<div class="t " style="left:788.8px;top:351.55px;font-family:&quot;Liberation Sans&quot;,sans-serif;font-size:6.5px;color:#161c24;">Clearcoat amount</div>
<div class="a " style="left:782.3px;top:359.56px;width:86.2px;height:11.31px;background:linear-gradient(180deg,#d2d8df 0,#c2c9d3 14%,#b9c1cc 88%,#99a1ad 100%)"></div>
<div class="t " style="left:788.8px;top:362.86px;font-family:&quot;Liberation Sans&quot;,sans-serif;font-size:6.5px;color:#161c24;">Clearcoat IOR</div>
<div class="a " style="left:782.3px;top:370.87px;width:86.2px;height:11.31px;background:linear-gradient(180deg,#d2d8df 0,#c2c9d3 14%,#b9c1cc 88%,#99a1ad 100%)"></div>
<div class="t " style="left:788.8px;top:374.17px;font-family:&quot;Liberation Sans&quot;,sans-serif;font-size:6.5px;color:#161c24;">Clearcoat rough.</div>
<div class="a " style="left:782.3px;top:382.18px;width:86.2px;height:11.31px;background:linear-gradient(180deg,#d2d8df 0,#c2c9d3 14%,#b9c1cc 88%,#99a1ad 100%)"></div>
<div class="t " style="left:788.8px;top:385.48px;font-family:&quot;Liberation Sans&quot;,sans-serif;font-size:6.5px;color:#161c24;">Clearcoat abs.</div>
<div class="a " style="left:782.3px;top:393.49px;width:86.2px;height:11.31px;background:linear-gradient(180deg,#d2d8df 0,#c2c9d3 14%,#b9c1cc 88%,#99a1ad 100%)"></div>
<div class="t " style="left:788.8px;top:396.79px;font-family:&quot;Liberation Sans&quot;,sans-serif;font-size:6.5px;color:#161c24;">Clearcoat bump</div>
<div class="a " style="left:782.3px;top:404.8px;width:86.2px;height:11.31px;background:linear-gradient(180deg,#d2d8df 0,#c2c9d3 14%,#b9c1cc 88%,#99a1ad 100%)"></div>
<div class="t " style="left:788.8px;top:408.1px;font-family:&quot;Liberation Sans&quot;,sans-serif;font-size:6.5px;color:#161c24;">Sheen amount</div>
<div class="a " style="left:782.3px;top:416.11px;width:86.2px;height:11.31px;background:linear-gradient(180deg,#d2d8df 0,#c2c9d3 14%,#b9c1cc 88%,#99a1ad 100%)"></div>
<div class="t " style="left:788.8px;top:419.41px;font-family:&quot;Liberation Sans&quot;,sans-serif;font-size:6.5px;color:#161c24;">Sheen color</div>
<div class="a " style="left:782.3px;top:427.42px;width:86.2px;height:11.31px;background:linear-gradient(180deg,#d2d8df 0,#c2c9d3 14%,#b9c1cc 88%,#99a1ad 100%)"></div>
<div class="t " style="left:788.8px;top:430.72px;font-family:&quot;Liberation Sans&quot;,sans-serif;font-size:6.5px;color:#161c24;">Sheen rough.</div>
<div class="a " style="left:782.3px;top:438.73px;width:86.2px;height:11.31px;background:linear-gradient(180deg,#d2d8df 0,#c2c9d3 14%,#b9c1cc 88%,#99a1ad 100%)"></div>
<div class="t " style="left:788.8px;top:442.03000000000003px;font-family:&quot;Liberation Sans&quot;,sans-serif;font-size:6.5px;color:#161c24;">SSS amount</div>
<div class="a " style="left:782.3px;top:450.03999999999996px;width:86.2px;height:11.31px;background:linear-gradient(180deg,#d2d8df 0,#c2c9d3 14%,#b9c1cc 88%,#99a1ad 100%)"></div>
<div class="t " style="left:788.8px;top:453.34px;font-family:&quot;Liberation Sans&quot;,sans-serif;font-size:6.5px;color:#161c24;">SSS radius</div>
<div class="a " style="left:782.3px;top:461.35px;width:86.2px;height:11.31px;background:linear-gradient(180deg,#d2d8df 0,#c2c9d3 14%,#b9c1cc 88%,#99a1ad 100%)"></div>
<div class="t " style="left:788.8px;top:464.65000000000003px;font-family:&quot;Liberation Sans&quot;,sans-serif;font-size:6.5px;color:#161c24;">SSS scatter color</div>
<div class="a " style="left:782.3px;top:472.65999999999997px;width:86.2px;height:11.31px;background:linear-gradient(180deg,#d2d8df 0,#c2c9d3 14%,#b9c1cc 88%,#99a1ad 100%)"></div>
<div class="t " style="left:788.8px;top:475.96px;font-family:&quot;Liberation Sans&quot;,sans-serif;font-size:6.5px;color:#161c24;">Vol. absorption</div>
<div class="a " style="left:782.3px;top:483.97px;width:86.2px;height:11.31px;background:linear-gradient(180deg,#d2d8df 0,#c2c9d3 14%,#b9c1cc 88%,#99a1ad 100%)"></div>
<div class="t " style="left:788.8px;top:487.27000000000004px;font-family:&quot;Liberation Sans&quot;,sans-serif;font-size:6.5px;color:#161c24;">Vol. scattering</div>
<div class="a " style="left:782.3px;top:495.28px;width:86.2px;height:11.31px;background:linear-gradient(180deg,#d2d8df 0,#c2c9d3 14%,#b9c1cc 88%,#99a1ad 100%)"></div>
<div class="t " style="left:788.8px;top:498.58px;font-family:&quot;Liberation Sans&quot;,sans-serif;font-size:6.5px;color:#161c24;">Refl. env.</div>
<div class="a " style="left:782.3px;top:506.59000000000003px;width:86.2px;height:11.31px;background:linear-gradient(180deg,#d2d8df 0,#c2c9d3 14%,#b9c1cc 88%,#99a1ad 100%)"></div>
<div class="t " style="left:788.8px;top:509.89000000000004px;font-family:&quot;Liberation Sans&quot;,sans-serif;font-size:6.5px;color:#161c24;">Refr. env.</div>
<div class="a " style="left:782.3px;top:517.9px;width:86.2px;height:8.100000000000023px;background:linear-gradient(180deg,#c9cfd8 0,#b7bfc9 30%,#a4acb7 38%,#c6ccd5 48%,#b9c0ca 70%,#9ea6b1 80%,#c2c8d1 90%,#aab2bd 100%)"></div>
<svg class="a" style="left:864.5px;top:522.0px" width="6" height="6"><path d="M6 0.5V6H0.5Z" fill="#444"/><path d="M5.5 0L0 5.5" stroke="#1f2d25" stroke-width="1" fill="none"/></svg>
<svg class="a" style="left:0;top:0;overflow:visible" width="1180" height="557" viewBox="0 0 1180 557"><path d="M632 215.6H716.5Q720.3 215.6 720.3 219.5V245Q720.3 251 724 251.5Q727.3 252.5 727.3 257V321Q727.3 326 724 326.5Q720.3 327 720.3 333V360.2Q720.3 364 716.5 364H632Q628.4 364 628.4 360.2V219.5Q628.4 215.6 632 215.6Z" fill="none" stroke="#222" stroke-width="3"/><path d="M632 215.6H716.5Q720.3 215.6 720.3 219.5V245Q720.3 251 724 251.5Q727.3 252.5 727.3 257V321Q727.3 326 724 326.5Q720.3 327 720.3 333V360.2Q720.3 364 716.5 364H632Q628.4 364 628.4 360.2V219.5Q628.4 215.6 632 215.6Z" fill="none" stroke="#f4f4f4" stroke-width="1.9" stroke-dasharray="4 2.4"/><path d="M309 175C347.28000000000003 175 340.32 148 378.6 148" fill="none" stroke="#7a2424" stroke-width="2.2" stroke-opacity=".55"/><path d="M309 175C347.28000000000003 175 340.32 148 378.6 148" fill="none" stroke="#e05050" stroke-width="1.25"/><path d="M309 175C397.2 175 441.3 172 529.5 172" fill="none" stroke="#7a2424" stroke-width="2.2" stroke-opacity=".55"/><path d="M309 175C397.2 175 441.3 172 529.5 172" fill="none" stroke="#e05050" stroke-width="1.25"/><path d="M473 139.2C504.075 139.2 498.425 160.5 529.5 160.5" fill="none" stroke="#7a2424" stroke-width="2.2" stroke-opacity=".55"/><path d="M473 139.2C504.075 139.2 498.425 160.5 529.5 160.5" fill="none" stroke="#e05050" stroke-width="1.25"/><path d="M510.5 227.5C520 227.5 518 183.5 529.5 183.5" fill="none" stroke="#7a2424" stroke-width="2.2" stroke-opacity=".55"/><path d="M510.5 227.5C520 227.5 518 183.5 529.5 183.5" fill="none" stroke="#e05050" stroke-width="1.25"/><path d="M372.5 296C395 296 392 236.5 416 236.5" fill="none" stroke="#7a2424" stroke-width="2.2" stroke-opacity=".55"/><path d="M372.5 296C395 296 392 236.5 416 236.5" fill="none" stroke="#e05050" stroke-width="1.25"/><path d="M497.5 359C563.75 359 563.75 348 630 348" fill="none" stroke="#7a2424" stroke-width="2.2" stroke-opacity=".55"/><path d="M497.5 359C563.75 359 563.75 348 630 348" fill="none" stroke="#e05050" stroke-width="1.25"/><path d="M624 163C628 163 627.2 166 627.2 175V326C627.2 333 626.8 336.5 630 336.5" fill="none" stroke="#7a2424" stroke-width="2.2" stroke-opacity=".55"/><path d="M624 163C628 163 627.2 166 627.2 175V326C627.2 333 626.8 336.5 630 336.5" fill="none" stroke="#e05050" stroke-width="1.25"/><path d="M724.5 290C752 290 752 184.3 780.8 184.3" fill="none" stroke="#7a2424" stroke-width="2.2" stroke-opacity=".55"/><path d="M724.5 290C752 290 752 184.3 780.8 184.3" fill="none" stroke="#e05050" stroke-width="1.25"/><path d="M724.5 290C752 290 752 331 780.8 331" fill="none" stroke="#7a2424" stroke-width="2.2" stroke-opacity=".55"/><path d="M724.5 290C752 290 752 331 780.8 331" fill="none" stroke="#e05050" stroke-width="1.25"/><circle cx="309" cy="175" r="3.7" fill="#d4ec1c" stroke="#34400c" stroke-width="1.3"/><circle cx="308.4" cy="174.4" r="2.1" fill="#e6fa4a" opacity=".7"/><circle cx="378.6" cy="148" r="3.7" fill="#d4ec1c" stroke="#34400c" stroke-width="1.3"/><circle cx="378.0" cy="147.4" r="2.1" fill="#e6fa4a" opacity=".7"/><circle cx="473" cy="139.2" r="3.7" fill="#d4ec1c" stroke="#34400c" stroke-width="1.3"/><circle cx="472.4" cy="138.6" r="2.1" fill="#e6fa4a" opacity=".7"/><circle cx="529.5" cy="160.5" r="3.7" fill="#d4ec1c" stroke="#34400c" stroke-width="1.3"/><circle cx="528.9" cy="159.9" r="2.1" fill="#e6fa4a" opacity=".7"/><circle cx="529.5" cy="172" r="3.7" fill="#d4ec1c" stroke="#34400c" stroke-width="1.3"/><circle cx="528.9" cy="171.4" r="2.1" fill="#e6fa4a" opacity=".7"/><circle cx="529.5" cy="183.5" r="3.7" fill="#d4ec1c" stroke="#34400c" stroke-width="1.3"/><circle cx="528.9" cy="182.9" r="2.1" fill="#e6fa4a" opacity=".7"/><circle cx="624" cy="163" r="3.7" fill="#d4ec1c" stroke="#34400c" stroke-width="1.3"/><circle cx="623.4" cy="162.4" r="2.1" fill="#e6fa4a" opacity=".7"/><circle cx="416" cy="236.5" r="3.7" fill="#d4ec1c" stroke="#34400c" stroke-width="1.3"/><circle cx="415.4" cy="235.9" r="2.1" fill="#e6fa4a" opacity=".7"/><circle cx="510.5" cy="227.5" r="3.7" fill="#d4ec1c" stroke="#34400c" stroke-width="1.3"/><circle cx="509.9" cy="226.9" r="2.1" fill="#e6fa4a" opacity=".7"/><circle cx="372.5" cy="296" r="3.7" fill="#d4ec1c" stroke="#34400c" stroke-width="1.3"/><circle cx="371.9" cy="295.4" r="2.1" fill="#e6fa4a" opacity=".7"/><circle cx="497.5" cy="359" r="3.7" fill="#d4ec1c" stroke="#34400c" stroke-width="1.3"/><circle cx="496.9" cy="358.4" r="2.1" fill="#e6fa4a" opacity=".7"/><circle cx="630" cy="336.5" r="3.7" fill="#d4ec1c" stroke="#34400c" stroke-width="1.3"/><circle cx="629.4" cy="335.9" r="2.1" fill="#e6fa4a" opacity=".7"/><circle cx="630" cy="348" r="3.7" fill="#d4ec1c" stroke="#34400c" stroke-width="1.3"/><circle cx="629.4" cy="347.4" r="2.1" fill="#e6fa4a" opacity=".7"/><circle cx="724.5" cy="290" r="3.7" fill="#d4ec1c" stroke="#34400c" stroke-width="1.3"/><circle cx="723.9" cy="289.4" r="2.1" fill="#e6fa4a" opacity=".7"/><circle cx="780.8" cy="184.255" r="3.6" fill="#d4ec1c" stroke="#34400c" stroke-width="1.3"/><circle cx="780.1999999999999" cy="183.655" r="2.0" fill="#e6fa4a" opacity=".7"/><circle cx="780.8" cy="195.565" r="3.6" fill="#b6bfce" stroke="#262c34" stroke-width="1.3"/><circle cx="780.8" cy="206.875" r="3.6" fill="#b6bfce" stroke="#262c34" stroke-width="1.3"/><circle cx="780.8" cy="218.185" r="3.6" fill="#b6bfce" stroke="#262c34" stroke-width="1.3"/><circle cx="780.8" cy="229.495" r="3.6" fill="#b6bfce" stroke="#262c34" stroke-width="1.3"/><circle cx="780.8" cy="240.805" r="3.6" fill="#b6bfce" stroke="#262c34" stroke-width="1.3"/><circle cx="780.8" cy="252.11499999999998" r="3.6" fill="#b6bfce" stroke="#262c34" stroke-width="1.3"/><circle cx="780.8" cy="263.42499999999995" r="3.6" fill="#b6bfce" stroke="#262c34" stroke-width="1.3"/><circle cx="780.8" cy="274.73499999999996" r="3.6" fill="#b6bfce" stroke="#262c34" stroke-width="1.3"/><circle cx="780.8" cy="286.04499999999996" r="3.6" fill="#b6bfce" stroke="#262c34" stroke-width="1.3"/><circle cx="780.8" cy="297.35499999999996" r="3.6" fill="#b6bfce" stroke="#262c34" stroke-width="1.3"/><circle cx="780.8" cy="308.66499999999996" r="3.6" fill="#b6bfce" stroke="#262c34" stroke-width="1.3"/><circle cx="780.8" cy="319.97499999999997" r="3.6" fill="#b6bfce" stroke="#262c34" stroke-width="1.3"/><circle cx="780.8" cy="331.28499999999997" r="3.6" fill="#d4ec1c" stroke="#34400c" stroke-width="1.3"/><circle cx="780.1999999999999" cy="330.68499999999995" r="2.0" fill="#e6fa4a" opacity=".7"/><circle cx="780.8" cy="342.59499999999997" r="3.6" fill="#b6bfce" stroke="#262c34" stroke-width="1.3"/><circle cx="780.8" cy="353.905" r="3.6" fill="#b6bfce" stroke="#262c34" stroke-width="1.3"/><circle cx="780.8" cy="365.215" r="3.6" fill="#b6bfce" stroke="#262c34" stroke-width="1.3"/><circle cx="780.8" cy="376.525" r="3.6" fill="#b6bfce" stroke="#262c34" stroke-width="1.3"/><circle cx="780.8" cy="387.835" r="3.6" fill="#b6bfce" stroke="#262c34" stroke-width="1.3"/><circle cx="780.8" cy="399.145" r="3.6" fill="#b6bfce" stroke="#262c34" stroke-width="1.3"/><circle cx="780.8" cy="410.455" r="3.6" fill="#b6bfce" stroke="#262c34" stroke-width="1.3"/><circle cx="780.8" cy="421.765" r="3.6" fill="#b6bfce" stroke="#262c34" stroke-width="1.3"/><circle cx="780.8" cy="433.075" r="3.6" fill="#b6bfce" stroke="#262c34" stroke-width="1.3"/><circle cx="780.8" cy="444.385" r="3.6" fill="#b6bfce" stroke="#262c34" stroke-width="1.3"/><circle cx="780.8" cy="455.69499999999994" r="3.6" fill="#b6bfce" stroke="#262c34" stroke-width="1.3"/><circle cx="780.8" cy="467.005" r="3.6" fill="#b6bfce" stroke="#262c34" stroke-width="1.3"/><circle cx="780.8" cy="478.31499999999994" r="3.6" fill="#b6bfce" stroke="#262c34" stroke-width="1.3"/><circle cx="780.8" cy="489.625" r="3.6" fill="#b6bfce" stroke="#262c34" stroke-width="1.3"/><circle cx="780.8" cy="500.93499999999995" r="3.6" fill="#b6bfce" stroke="#262c34" stroke-width="1.3"/><circle cx="780.8" cy="512.245" r="3.6" fill="#b6bfce" stroke="#262c34" stroke-width="1.3"/><circle cx="875.5" cy="296" r="3.2" fill="#b6bfce" stroke="#262c34" stroke-width="1.3"/><path d="M497.8 358.6L772 187.9" stroke="#0c10df" stroke-width="4.3" stroke-linecap="round" fill="none"/><path d="M781.7 181.6L768.2 183.2L775.8 193.6Z" fill="#0c10df" stroke="#0c10df" stroke-width="1" stroke-linejoin="round"/><path d="M730.5 254.5C740 246 754 236 767 227" stroke="#0c10df" stroke-width="3.6" stroke-linecap="round" fill="none"/><path d="M739.5 233C750 238 762 245 772.5 251" stroke="#0c10df" stroke-width="3.6" stroke-linecap="round" fill="none"/></svg>
<div class="a " style="left:986px;top:26px;width:194px;height:518px;background:#444"></div>
<div class="a " style="left:1076px;top:17px;width:104px;height:8.5px;background:#5c5c5c"></div>
<div class="t ui r" style="left:1078px;top:18px;color:#d8d8d8;font-size:6.5px">View1</div>
<div class="a " style="left:986px;top:26px;width:194px;height:12.7px;background:linear-gradient(#686868 0,#4e4e4e 12%,#3a3a3a 85%,#2a2a2a 100%)"></div>
<div class="t ui r" style="left:990px;top:28.9px;font-weight:bold;font-size:7.1px;color:#f4f4f4">Map #64&nbsp; ( Stucco )</div>
<div class="a " style="left:989px;top:41px;width:191px;height:11px;background:#5b5b5b"></div>
<div class="t ui r" style="left:991px;top:43.2px;color:#cfcfcf">Map #64</div>
<div class="a " style="left:987px;top:55px;width:193px;height:108px;background:#4d4d4d"></div>
<div class="a " style="left:987px;top:163px;width:193px;height:1.2px;background:#333"></div>
<svg class="a" style="left:991px;top:61.3px" width="4" height="3"><path d="M0 0H3.6L1.8 2.6Z" fill="#ddd"/></svg>
<div class="t ui r" style="left:999px;top:59.4px;font-weight:bold;font-size:7.1px;color:#fff">Coordinates</div>
<div class="a " style="left:991.5px;top:73px;width:190px;height:86.5px;border:1px solid #404040;border-right:none"></div>
<div class="a " style="left:994px;top:69px;width:36px;height:7px;background:#4d4d4d"></div>
<div class="t ui r" style="left:995px;top:70.5px;color:#eee">Coordinates</div>
<div class="t ui r" style="left:998px;top:83.5px;color:#eee">Source:</div>
<div class="a " style="left:1024.5px;top:81px;width:78.5px;height:11px;background:#5e5e5e"></div>
<div class="t ui r" style="left:1027px;top:83.5px;color:#d6d6d6">Object XYZ</div>
<svg class="a" style="left:1095px;top:85px" width="5" height="4"><path d="M0 0H4.6L2.3 3.4Z" fill="#eee"/></svg>
<div class="t ui r" style="left:1113.5px;top:84px;color:#eee">Map Channel:</div>
<div class="a " style="left:1160px;top:82px;width:20px;height:9px;background:#525252"></div>
<div class="t ui r" style="left:1029px;top:99px;color:#eee">Offset</div>
<div class="t ui r" style="left:1084px;top:99px;color:#eee">Tiling</div>
<div class="t ui r" style="left:1135px;top:99px;color:#eee">Angle:</div>
<div class="t ui r" style="left:1011.5px;top:109.2px;color:#eee">X:</div>
<div class="a " style="left:1021px;top:107.7px;width:38px;height:8px;background:#5d5d5d"></div>
<div class="t ui r" style="left:1022.5px;top:108.7px;color:#e6e6e6">0,0</div>
<svg class="a" style="left:1053.5px;top:108.9px" width="4" height="6"><path d="M0.6 2.4L2 0.6L3.4 2.4ZM0.6 3.6L2 5.4L3.4 3.6Z" fill="#f0f0f0"/></svg>
<div class="a " style="left:1078px;top:107.7px;width:32px;height:8px;background:#5d5d5d"></div>
<div class="t ui r" style="left:1079.5px;top:108.7px;color:#e6e6e6">1,0</div>
<svg class="a" style="left:1104.5px;top:108.9px" width="4" height="6"><path d="M0.6 2.4L2 0.6L3.4 2.4ZM0.6 3.6L2 5.4L3.4 3.6Z" fill="#f0f0f0"/></svg>
<div class="a " style="left:1127px;top:107.7px;width:36px;height:8px;background:#5d5d5d"></div>
<div class="t ui r" style="left:1128.5px;top:108.7px;color:#e6e6e6">0,0</div>
<svg class="a" style="left:1157.5px;top:108.9px" width="4" height="6"><path d="M0.6 2.4L2 0.6L3.4 2.4ZM0.6 3.6L2 5.4L3.4 3.6Z" fill="#f0f0f0"/></svg>
<div class="t ui r" style="left:1011.5px;top:121.7px;color:#eee">Y:</div>
<div class="a " style="left:1021px;top:120.2px;width:38px;height:8px;background:#5d5d5d"></div>
<div class="t ui r" style="left:1022.5px;top:121.2px;color:#e6e6e6">0,0</div>
<svg class="a" style="left:1053.5px;top:121.4px" width="4" height="6"><path d="M0.6 2.4L2 0.6L3.4 2.4ZM0.6 3.6L2 5.4L3.4 3.6Z" fill="#f0f0f0"/></svg>
<div class="a " style="left:1078px;top:120.2px;width:32px;height:8px;background:#5d5d5d"></div>
<div class="t ui r" style="left:1079.5px;top:121.2px;color:#e6e6e6">1,0</div>
<svg class="a" style="left:1104.5px;top:121.4px" width="4" height="6"><path d="M0.6 2.4L2 0.6L3.4 2.4ZM0.6 3.6L2 5.4L3.4 3.6Z" fill="#f0f0f0"/></svg>
<div class="a " style="left:1127px;top:120.2px;width:36px;height:8px;background:#5d5d5d"></div>
<div class="t ui r" style="left:1128.5px;top:121.2px;color:#e6e6e6">0,0</div>
<svg class="a" style="left:1157.5px;top:121.4px" width="4" height="6"><path d="M0.6 2.4L2 0.6L3.4 2.4ZM0.6 3.6L2 5.4L3.4 3.6Z" fill="#f0f0f0"/></svg>
<div class="t ui r" style="left:1011.5px;top:133.5px;color:#eee">Z:</div>
<div class="a " style="left:1021px;top:132px;width:38px;height:8px;background:#5d5d5d"></div>
<div class="t ui r" style="left:1022.5px;top:133.0px;color:#e6e6e6">0,0</div>
<svg class="a" style="left:1053.5px;top:133.2px" width="4" height="6"><path d="M0.6 2.4L2 0.6L3.4 2.4ZM0.6 3.6L2 5.4L3.4 3.6Z" fill="#f0f0f0"/></svg>
<div class="a " style="left:1078px;top:132px;width:32px;height:8px;background:#5d5d5d"></div>
<div class="t ui r" style="left:1079.5px;top:133.0px;color:#e6e6e6">1,0</div>
<svg class="a" style="left:1104.5px;top:133.2px" width="4" height="6"><path d="M0.6 2.4L2 0.6L3.4 2.4ZM0.6 3.6L2 5.4L3.4 3.6Z" fill="#f0f0f0"/></svg>
<div class="a " style="left:1127px;top:132px;width:36px;height:8px;background:#5d5d5d"></div>
<div class="t ui r" style="left:1128.5px;top:133.0px;color:#e6e6e6">0,0</div>
<svg class="a" style="left:1157.5px;top:133.2px" width="4" height="6"><path d="M0.6 2.4L2 0.6L3.4 2.4ZM0.6 3.6L2 5.4L3.4 3.6Z" fill="#f0f0f0"/></svg>
<div class="t ui r" style="left:1025px;top:148.6px;color:#eee">Blur:</div>
<div class="a " style="left:1044px;top:147.3px;width:27.5px;height:8px;background:#5d5d5d"></div>
<div class="t ui r" style="left:1045.5px;top:148.3px;color:#e6e6e6">0,01</div>
<svg class="a" style="left:1066.0px;top:148.5px" width="4" height="6"><path d="M0.6 2.4L2 0.6L3.4 2.4ZM0.6 3.6L2 5.4L3.4 3.6Z" fill="#f0f0f0"/></svg>
<div class="t ui r" style="left:1085.5px;top:148.6px;color:#eee">Blur offset:</div>
<div class="a " style="left:1123px;top:147.3px;width:26px;height:8px;background:#5d5d5d"></div>
<div class="t ui r" style="left:1124.5px;top:148.3px;color:#e6e6e6">0,0</div>
<svg class="a" style="left:1143.5px;top:148.5px" width="4" height="6"><path d="M0.6 2.4L2 0.6L3.4 2.4ZM0.6 3.6L2 5.4L3.4 3.6Z" fill="#f0f0f0"/></svg>
<div class="a " style="left:987px;top:164.5px;width:193px;height:96px;background:#4d4d4d"></div>
<svg class="a" style="left:991px;top:172.3px" width="4" height="3"><path d="M0 0H3.6L1.8 2.6Z" fill="#ddd"/></svg>
<div class="t ui r" style="left:999px;top:170px;font-weight:bold;font-size:7.2px;color:#fff">Stucco Parameters</div>
<div class="t ui r" style="left:1014px;top:188px;color:#eee">Size:</div>
<div class="a " style="left:1036px;top:187px;width:37.5px;height:8px;background:#5d5d5d"></div>
<div class="t ui r" style="left:1037.5px;top:188.0px;color:#cfcfcf">80,0</div>
<svg class="a" style="left:1068.0px;top:188.2px" width="4" height="6"><path d="M0.6 2.4L2 0.6L3.4 2.4ZM0.6 3.6L2 5.4L3.4 3.6Z" fill="#f0f0f0"/></svg>
<div class="t ui r" style="left:1090px;top:188px;color:#eee">Thickness:</div>
<div class="a " style="left:1126px;top:187px;width:38px;height:8px;background:#5d5d5d"></div>
<div class="t ui r" style="left:1127.5px;top:188.0px;color:#e6e6e6">0,12</div>
<svg class="a" style="left:1158.5px;top:188.2px" width="4" height="6"><path d="M0.6 2.4L2 0.6L3.4 2.4ZM0.6 3.6L2 5.4L3.4 3.6Z" fill="#f0f0f0"/></svg>
<div class="t ui r" style="left:1050.5px;top:203.8px;color:#eee">Threshold:</div>
<div class="a " style="left:1087px;top:203px;width:38px;height:8px;background:#5d5d5d"></div>
<div class="t ui r" style="left:1088.5px;top:204.0px;color:#e6e6e6">0,51</div>
<svg class="a" style="left:1119.5px;top:204.2px" width="4" height="6"><path d="M0.6 2.4L2 0.6L3.4 2.4ZM0.6 3.6L2 5.4L3.4 3.6Z" fill="#f0f0f0"/></svg>
<div class="t ui r" style="left:1134.5px;top:214px;color:#eee">Maps</div>
<div class="t ui r" style="left:1027px;top:227.5px;color:#f0f0f0">Color #1</div>
<div class="a " style="left:1058px;top:222px;width:37.5px;height:13.3px;background:#000"></div>
<div class="a " style="left:1100px;top:222.6px;width:76px;height:12.4px;background:#575757"></div>
<div class="t ui r" style="left:1113px;top:225.5px;color:#c8c8c8">Map #60&nbsp; ( Mix )</div>
<div class="a " style="left:996px;top:230.6px;width:25px;height:10.7px;background:#5a5a5a"></div>
<div class="t ui r" style="left:1000px;top:232.8px;color:#c8c8c8">Swap</div>
<div class="t ui r" style="left:1027px;top:242.5px;color:#f0f0f0">Color #2</div>
<div class="a " style="left:1058px;top:241.8px;width:37.5px;height:13px;background:#f0f0f0;border:1px solid #111"></div>
<div class="a " style="left:1100px;top:242px;width:76px;height:12.8px;background:#575757"></div>
<div class="t ui r" style="left:1100.5px;top:245px;color:#c8c8c8;font-size:6.65px">Map #84 (e925356b39f3</div>
<svg class="a" style="left:1076.6px;top:347.4px" width="12" height="20" viewBox="0 0 12 20"><path d="M1 1V15L4.3 11.8L6.6 17.5L9 16.5L6.7 11H11Z" fill="#fff" stroke="#111" stroke-width="1.1" stroke-linejoin="round"/></svg>
<div class="a " style="left:212px;top:547px;width:771px;height:12px;background:#262626;border-radius:4px 4px 0 0"></div>
<div class="a " style="left:233px;top:553.5px;width:45px;height:4px;background:linear-gradient(90deg,#2e2c2a,#5e564a 50%,#2e2c2a)"></div>
<div class="a " style="left:401px;top:553px;width:30px;height:4px;background:#f0f0f0"></div>
<div class="a " style="left:552px;top:553px;width:48px;height:4px;background:#ececec"></div>
<div class="a " style="left:606.5px;top:553px;width:47.5px;height:4px;background:#ececec"></div>
<div class="a " style="left:569px;top:554px;width:14px;height:3px;background:#1a1a1a;border-radius:3px 3px 0 0"></div>
<div class="a " style="left:623px;top:554px;width:14px;height:3px;background:#1a1a1a;border-radius:3px 3px 0 0"></div>
<div class="a " style="left:713.5px;top:553.5px;width:46px;height:4px;background:#c08a94"></div>
<div class="a " style="left:927px;top:553px;width:46px;height:5px;border:1.5px solid #e8e020;border-bottom:none;background:#2c2c2c"></div>
</div></body></html>
